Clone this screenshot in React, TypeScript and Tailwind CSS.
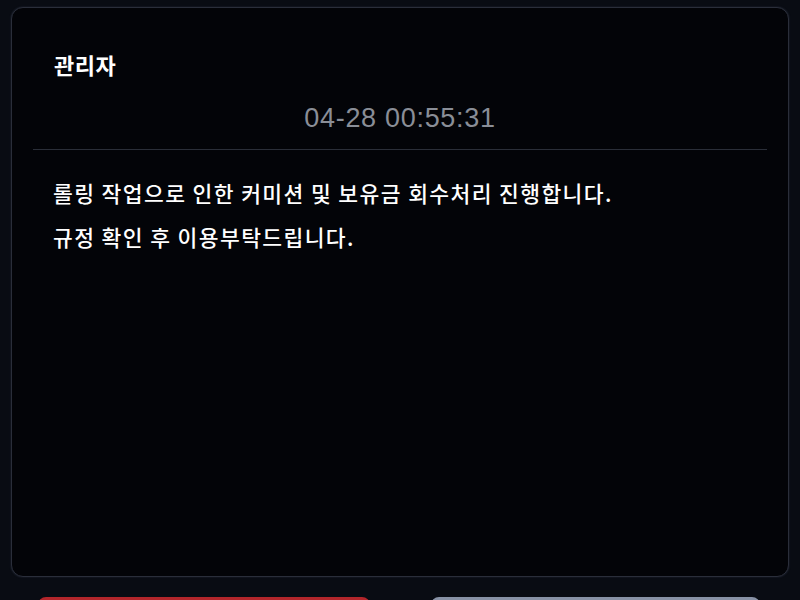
import React from 'react';

const notice = {
  author: '관리자',
  time: '04-28 00:55:31',
  lines: [
    '롤링 작업으로 인한 커미션 및 보유금 회수처리 진행합니다.',
    '규정 확인 후 이용부탁드립니다.',
  ],
};

export default function App() {
  return (
    <div
      className="h-[600px] w-[800px] overflow-hidden bg-[#090c13] px-[11px] pt-[7px]"
      style={{ fontFamily: '"Noto Sans CJK KR", "Noto Sans", sans-serif' }}
    >
      <div className="h-[570px] rounded-[12px] border border-[#2a2e3a] bg-[#030408] px-[21px] pt-[41px] shadow-[0_0_2px_rgba(90,100,130,0.35)]">
        <h2 className="pl-[21px] text-[22px] font-bold leading-[30px] tracking-[0.5px] text-white">{notice.author}</h2>
        <p
          className="mt-[21px] text-center text-[27px] leading-[36px] tracking-[0.7px] text-[#8a8e97]"
          style={{ fontFamily: '"Liberation Sans", Arial, sans-serif' }}
        >
          {notice.time}
        </p>
        <div className="mt-[13px] h-px bg-[#2a2e38]" />
        <div className="mt-[21px] pl-[20px] text-[21.5px] font-medium leading-[44px] tracking-[1.4px] text-white">
          {notice.lines.map((line) => (
            <p key={line}>{line}</p>
          ))}
        </div>
      </div>

      <div className="mt-[20px] flex pl-[27px] pr-[29px]">
        <button className="h-[48px] w-[332px] rounded-[8px] bg-[#b3262b]" />
        <div className="flex-1" />
        <button className="h-[48px] w-[329px] rounded-[8px] bg-[#8892a6]" />
      </div>
    </div>
  );
}
